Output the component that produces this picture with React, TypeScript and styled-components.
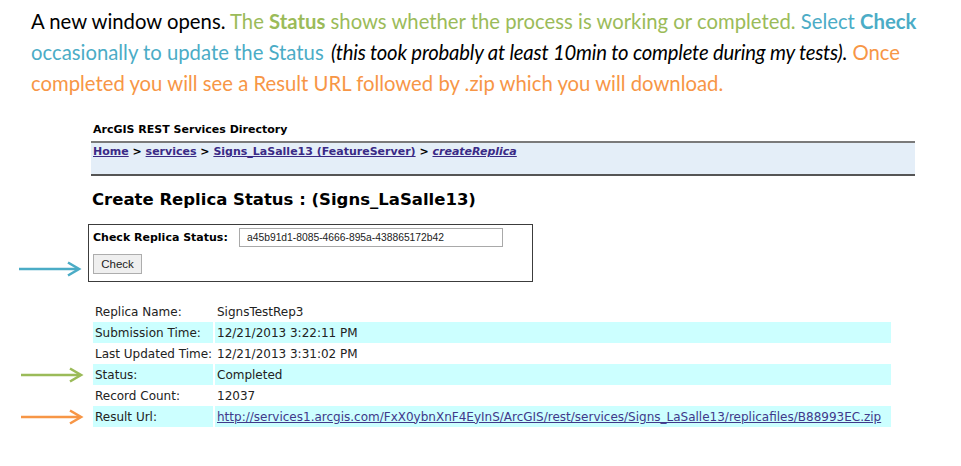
import React from "react";
import styled, { createGlobalStyle } from "styled-components";

const GlobalStyle = createGlobalStyle`
  html, body {
    margin: 0;
    padding: 0;
    background: #ffffff;
  }
`;

const Page = styled.div`
  width: 961px;
  height: 466px;
  overflow: hidden;
  background: #ffffff;
`;

const Intro = styled.p`
  margin: 0;
  padding: 6px 31px 0 31px;
  font-family: Lato, "Open Sans", sans-serif;
  font-size: 20.3px;
  line-height: 31px;
  color: #000000;
`;

const Tint = styled.span<{ $tone: "green" | "teal" | "orange" }>`
  color: ${(p) =>
    p.$tone === "green" ? "#9bbb59" : p.$tone === "teal" ? "#4bacc6" : "#f79646"};
`;

const Strong = styled.b`
  font-weight: 700;
`;

const Aside = styled.i`
  font-style: italic;
  letter-spacing: -0.2px;
  color: #000000;
  margin-left: 2px;
`;

const Directory = styled.div`
  margin: 23px 0 0 91px;
  width: 824px;
  font-family: "DejaVu Sans", Verdana, sans-serif;
`;

const DirTitle = styled.div`
  font-size: 11px;
  font-weight: 700;
  padding-left: 2px;
  line-height: 15px;
`;

const Crumbs = styled.div`
  margin-top: 4px;
  height: 30px;
  background: #e4eef8;
  border-top: 2px solid #7a7a7a;
  border-bottom: 2px solid #555555;
  padding: 1px 0 0 2px;
  font-size: 11px;
  font-weight: 700;
  line-height: 15px;
`;

const Crumb = styled.a<{ $current?: boolean }>`
  color: #3a2a86;
  text-decoration: underline;
  font-style: ${(p) => (p.$current ? "italic" : "normal")};
`;

const Heading = styled.h2`
  margin: 13px 0 0 1px;
  font-size: 16.5px;
  font-weight: 700;
  line-height: 22px;
`;

const CheckRow = styled.div`
  display: flex;
  align-items: flex-end;
  margin-top: 13px;
`;

const Gutter = styled.div`
  width: 88px;
  padding: 0 0 5px 18px;
  box-sizing: border-box;
`;

const CheckBox = styled.div`
  width: 445px;
  height: 58px;
  box-sizing: border-box;
  border: 1px solid #3c3c3c;
  padding: 3px 0 0 4px;
  font-family: "DejaVu Sans", Verdana, sans-serif;
  display: flex;
  flex-direction: column;
  gap: 7px;
`;

const FieldLine = styled.div`
  display: flex;
  align-items: center;
`;

const FieldLabel = styled.label`
  flex: 0 0 146px;
  font-size: 11px;
  font-weight: 700;
  white-space: nowrap;
`;

const TextInput = styled.input`
  width: 264px;
  height: 19px;
  box-sizing: border-box;
  border: 1px solid #a9a9a9;
  padding: 0 0 0 7px;
  font-family: "Liberation Sans", Arial, sans-serif;
  font-size: 10.3px;
  color: #222;
`;

const CheckButton = styled.button`
  width: 49px;
  height: 20px;
  border: 1px solid #adadad;
  background: #efefef;
  font-family: "Liberation Sans", Arial, sans-serif;
  font-size: 11.5px;
  color: #222;
  padding: 0;
`;

const InfoTable = styled.table`
  margin-top: 19px;
  border-collapse: separate;
  border-spacing: 2px 0;
  font-family: "DejaVu Sans", Verdana, sans-serif;
  font-size: 12px;
  color: #222;
`;

const Row = styled.tr<{ $shaded?: boolean }>`
  height: 21px;
  td + td {
    background: ${(p) => (p.$shaded ? "#ccffff" : "transparent")};
  }
`;

const ArrowCell = styled.td`
  width: 71px;
  padding: 0 0 0 18px;
  vertical-align: middle;
`;

const LabelCell = styled.td`
  width: 118px;
  padding: 0 0 0 2px;
  white-space: nowrap;
`;

const ValueCell = styled.td`
  width: 674px;
  padding: 0 0 0 2px;
  white-space: nowrap;
`;

const ResultLink = styled.a`
  color: #40398a;
  text-decoration: underline;
`;

const Arrow = ({ color }: { color: string }) => (
  <svg width="64" height="16" viewBox="0 0 64 16" style={{ display: "block" }}>
    <path d="M1 8 H60" stroke={color} strokeWidth="2.6" fill="none" />
    <path d="M50 1.5 L61 8 L50 14.5" stroke={color} strokeWidth="2.6" fill="none" />
  </svg>
);

const rows: { label: string; value: React.ReactNode; shaded?: boolean; arrow?: string }[] = [
  { label: "Replica Name:", value: "SignsTestRep3" },
  { label: "Submission Time:", value: "12/21/2013 3:22:11 PM", shaded: true },
  { label: "Last Updated Time:", value: "12/21/2013 3:31:02 PM" },
  { label: "Status:", value: "Completed", shaded: true, arrow: "#9bbb59" },
  { label: "Record Count:", value: "12037" },
  {
    label: "Result Url:",
    value: (
      <ResultLink href="#">
        http://services1.arcgis.com/FxX0ybnXnF4EyInS/ArcGIS/rest/services/Signs_LaSalle13/replicafiles/B88993EC.zip
      </ResultLink>
    ),
    shaded: true,
    arrow: "#f79646",
  },
];

export default function App() {
  return (
    <Page>
      <GlobalStyle />
      <Intro>
        A new window opens. <Tint $tone="green">The <Strong>Status</Strong> shows whether the process is working or completed.</Tint>{" "}
        <Tint $tone="teal">Select <Strong>Check</Strong> occasionally to update the Status</Tint>{" "}
        <Aside>(this took probably at least 10min to complete during my tests).</Aside>{" "}
        <Tint $tone="orange">Once completed you will see a Result URL followed by .zip which you will download.</Tint>
      </Intro>

      <Directory>
        <DirTitle>ArcGIS REST Services Directory</DirTitle>
        <Crumbs>
          <Crumb href="#">Home</Crumb> &gt; <Crumb href="#">services</Crumb> &gt;{" "}
          <Crumb href="#">Signs_LaSalle13 (FeatureServer)</Crumb> &gt;{" "}
          <Crumb href="#" $current>
            createReplica
          </Crumb>
        </Crumbs>
        <Heading>Create Replica Status : (Signs_LaSalle13)</Heading>
      </Directory>

      <CheckRow>
        <Gutter>
          <Arrow color="#4bacc6" />
        </Gutter>
        <CheckBox>
          <FieldLine>
            <FieldLabel>Check Replica Status:</FieldLabel>
            <TextInput defaultValue="a45b91d1-8085-4666-895a-438865172b42" />
          </FieldLine>
          <CheckButton>Check</CheckButton>
        </CheckBox>
      </CheckRow>

      <InfoTable>
        <tbody>
          {rows.map((r) => (
            <Row key={r.label} $shaded={r.shaded}>
              <ArrowCell>{r.arrow && <Arrow color={r.arrow} />}</ArrowCell>
              <LabelCell>{r.label}</LabelCell>
              <ValueCell>{r.value}</ValueCell>
            </Row>
          ))}
        </tbody>
      </InfoTable>
    </Page>
  );
}
